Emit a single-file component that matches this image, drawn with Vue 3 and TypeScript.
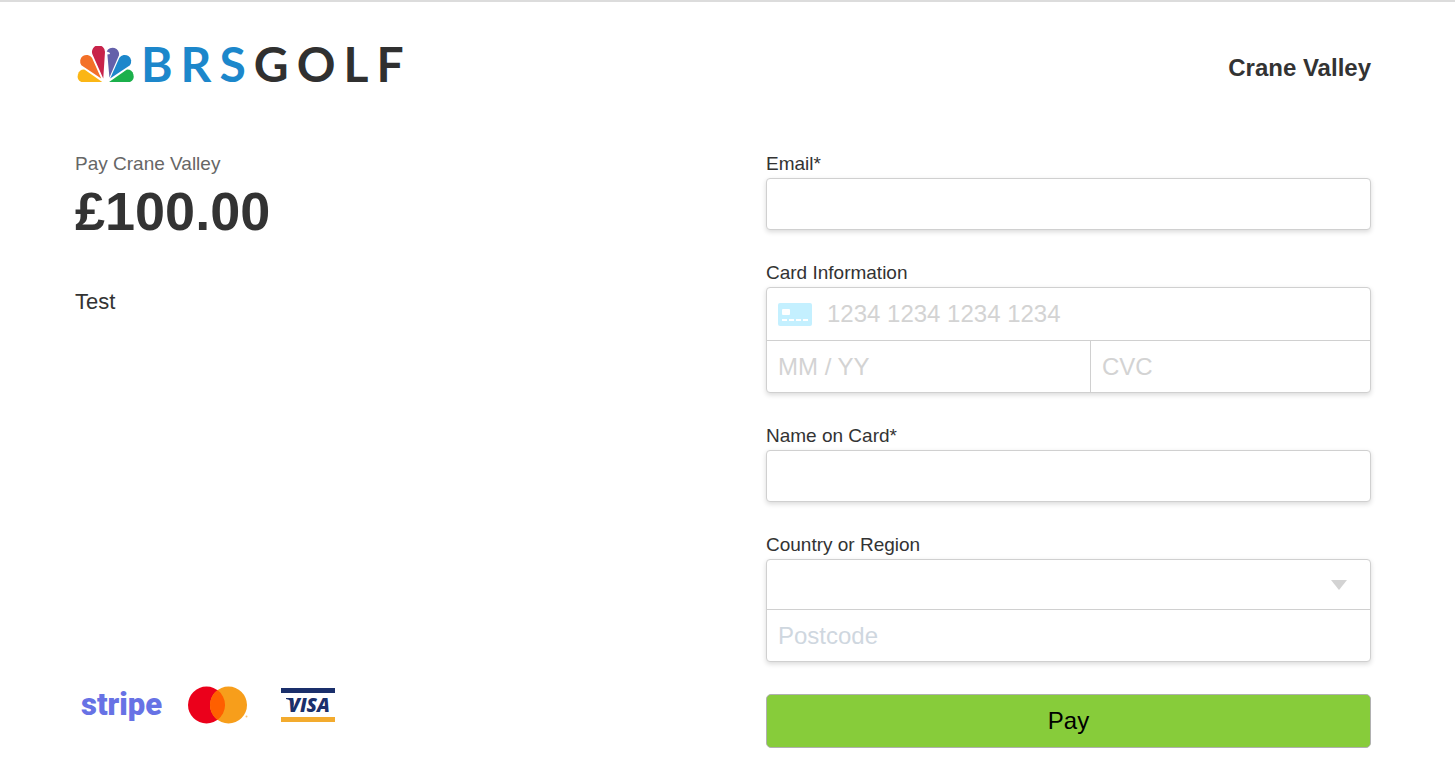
<script setup lang="ts">
import { reactive } from 'vue'

const club = 'Crane Valley'
const amount = '£100.00'
const description = 'Test'

const form = reactive({
  email: '',
  cardNumber: '',
  expiry: '',
  cvc: '',
  name: '',
  country: '',
  postcode: '',
})

const countries: string[] = ['United Kingdom', 'Ireland', 'Canada', 'United States']
</script>

<template>
  <div class="page">
    <header class="header">
      <div class="brand">
        <svg class="peacock" viewBox="0 0 180 108" aria-hidden="true">
          <path fill="#fbb615" d="M79 105 L28 69 A19 19 0 0 0 18 105 Z" />
          <path fill="#f37028" d="M76 95 L49 34 A18 18 0 1 0 18 56 Z" />
          <path fill="#c8234a" d="M82 95 L87 18 A19 19 0 1 0 50 23 Z" />
          <path fill="#6460aa" d="M100 92 L128 27 A19 19 0 0 0 92 16 L100 19 L102 23 L94 25 Z" />
          <path fill="#1c87cb" d="M102 95 L129 34 A18 18 0 1 1 160 56 Z" />
          <path fill="#1bb04b" d="M99 105 L150 69 A19 19 0 0 1 160 105 Z" />
        </svg>
        <span class="wordmark"><span class="brs">BRS</span>GOLF</span>
      </div>
      <h1 class="club">{{ club }}</h1>
    </header>

    <main class="content">
      <section class="summary">
        <div>
          <p class="payee">Pay {{ club }}</p>
          <p class="amount">{{ amount }}</p>
          <p class="description">{{ description }}</p>
        </div>
        <div class="marks">
          <span class="stripe">stripe</span>
          <svg class="mastercard" viewBox="0 0 60 38" role="img" aria-label="Mastercard">
            <circle cx="18.500" cy="19" r="18.500" fill="#eb001b" />
            <circle cx="40.500" cy="19" r="18.500" fill="#f79e1b" />
            <path fill="#ff5f00" d="M29.5 4.1 A18.5 18.5 0 0 1 29.5 33.9 A18.5 18.5 0 0 1 29.5 4.1 Z" />
            <circle cx="58.500" cy="30.500" r="1" fill="#f9c270" />
          </svg>
          <span class="visa">
            <svg class="flick" viewBox="0 0 8 8" aria-hidden="true">
              <path fill="#1a2f6b" d="M0 0 H5 Q7 0 7.300 2 L8 8 Q6 2 0 1 Z" />
            </svg>
            <span>VISA</span>
          </span>
        </div>
      </section>

      <form class="form" @submit.prevent>
        <div class="field">
          <label for="email">Email*</label>
          <input id="email" v-model="form.email" class="box single" type="email" />
        </div>

        <div class="field">
          <label for="card-number">Card Information</label>
          <div class="box">
            <div class="card-row">
              <svg class="card-icon" viewBox="0 0 34 23" aria-hidden="true">
                <rect width="34" height="23" rx="2" fill="#c4f0ff" />
                <rect x="4" y="6" width="8" height="6" rx="1" fill="#fff" />
                <path d="M4 17h5M11 17h5M18 17h5M25 17h5" stroke="#fff" stroke-width="2" />
              </svg>
              <input id="card-number" v-model="form.cardNumber" inputmode="numeric" placeholder="1234 1234 1234 1234" />
            </div>
            <div class="split">
              <input v-model="form.expiry" aria-label="Expiry date" placeholder="MM / YY" />
              <input v-model="form.cvc" aria-label="Security code" placeholder="CVC" />
            </div>
          </div>
        </div>

        <div class="field">
          <label for="name">Name on Card*</label>
          <input id="name" v-model="form.name" class="box single" type="text" />
        </div>

        <div class="field">
          <label for="country">Country or Region</label>
          <div class="box">
            <div class="select-row">
              <select id="country" v-model="form.country">
                <option value=""></option>
                <option v-for="country in countries" :key="country" :value="country">{{ country }}</option>
              </select>
              <svg class="arrow" viewBox="0 0 16 10" aria-hidden="true">
                <path d="M0 0H16L8 10Z" fill="#d3d3d3" />
              </svg>
            </div>
            <input v-model="form.postcode" class="postcode" aria-label="Postcode" placeholder="Postcode" />
          </div>
        </div>

        <button class="pay" type="submit">Pay</button>
      </form>
    </main>
  </div>
</template>

<style>
body {
  margin: 0;
  background: #fff;
}
</style>

<style scoped>
.page,
.page * {
  box-sizing: border-box;
}

.page {
  padding: 40px 84px 32px 75px;
  border-top: 2px solid #dcdcdc;
  color: #333;
  font-family: "Liberation Sans", Arial, sans-serif;
}

.header {
  display: flex;
  align-items: center;
  justify-content: space-between;
  height: 48px;
  margin-bottom: 60px;
}

.brand {
  display: flex;
  align-items: center;
  gap: 4px;
  padding-bottom: 4px;
}

.peacock {
  width: 62px;
  height: 37px;
}

.wordmark {
  font: 700 48px/48px Lato, sans-serif;
  letter-spacing: 8px;
  color: #303030;
}

.brs {
  color: #1c87cb;
}

.club {
  margin: 4px 0 0;
  font-size: 24px;
  line-height: 28px;
}

.content {
  display: grid;
  grid-template-columns: 1fr 1fr;
  column-gap: 86px;
}

.summary {
  display: flex;
  flex-direction: column;
  justify-content: space-between;
}

.summary p {
  margin: 0;
}

.payee {
  color: #666;
  font-size: 19px;
  line-height: 28px;
}

.summary .amount {
  margin: 0 0 45px;
  font-size: 54px;
  font-weight: 700;
  line-height: 66px;
}

.description {
  font-size: 22px;
  line-height: 26px;
}

.marks {
  display: flex;
  align-items: center;
  height: 38px;
  margin: 0 0 24px 6px;
}

.stripe {
  width: 107px;
  color: #6772e5;
  font: 900 31px/38px Roboto, sans-serif;
}

.mastercard {
  width: 60px;
  height: 38px;
  margin-right: 33px;
}

.visa {
  display: flex;
  align-items: center;
  justify-content: center;
  width: 54px;
  height: 34px;
  border-top: 5px solid #1a2f6b;
  border-bottom: 5px solid #f3ab2e;
  color: #1a2f6b;
  font: italic 800 19px/24px "Open Sans", sans-serif;
}

.flick {
  width: 8px;
  height: 8px;
  margin: 0 -6px 6px 0;
}

.form {
  display: flex;
  flex-direction: column;
}

.field {
  display: flex;
  flex-direction: column;
  margin-bottom: 29px;
}

.field:last-of-type {
  margin-bottom: 32px;
}

label {
  font-size: 19px;
  line-height: 28px;
}

.box {
  width: 100%;
  border: 1px solid #d0d0d0;
  border-radius: 4px;
  background: #fff;
  box-shadow: 0 2px 5px rgba(0, 0, 0, 0.15);
}

input,
select {
  min-width: 0;
  margin: 0;
  padding: 0 11px;
  border: 0;
  background: transparent;
  color: #333;
  font: 24px/28px "Liberation Sans", Arial, sans-serif;
}

input::placeholder {
  color: #d3d3d3;
  opacity: 1;
}

.single {
  height: 52px;
  border: 1px solid #d0d0d0;
}

.card-row {
  display: flex;
  align-items: center;
  height: 53px;
  padding-left: 11px;
  border-bottom: 1px solid #d0d0d0;
}

.card-icon {
  width: 34px;
  height: 23px;
}

.card-row input {
  flex: 1;
  height: 52px;
  padding-left: 15px;
}

.split {
  display: grid;
  grid-template-columns: 324fr 279fr;
}

.split input {
  height: 51px;
}

.split input:first-child {
  border-right: 1px solid #d0d0d0;
}

.select-row {
  position: relative;
  border-bottom: 1px solid #d0d0d0;
}

select {
  display: block;
  width: 100%;
  height: 49px;
  appearance: none;
}

.arrow {
  position: absolute;
  top: 20px;
  right: 23px;
  width: 16px;
  height: 10px;
  pointer-events: none;
}

.postcode {
  display: block;
  width: 100%;
  height: 51px;
}

.postcode::placeholder {
  color: #cfd7df;
}

.pay {
  height: 54px;
  border: 1px solid #b0b0b0;
  border-radius: 5px;
  background: #87cc3a;
  color: #000;
  font: 24px/28px "Liberation Sans", Arial, sans-serif;
  cursor: pointer;
}
</style>
